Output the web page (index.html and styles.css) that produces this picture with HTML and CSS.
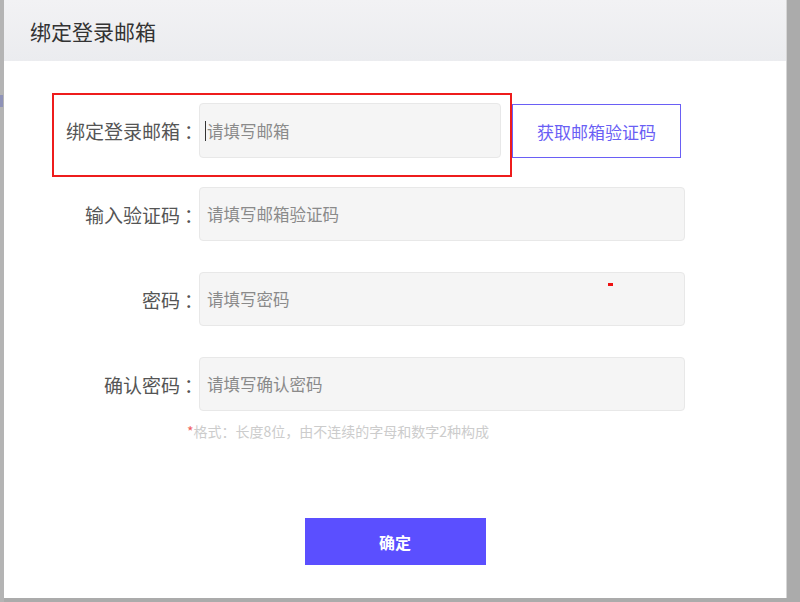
FILE: index.html
```html
<!DOCTYPE html>
<html lang="zh-CN">
<head>
    <meta charset="UTF-8">
    <meta name="viewport" content="width=device-width, initial-scale=1.0">
    <title>绑定登录邮箱</title>
    <link rel="stylesheet" href="styles.css">
</head>
<body>
    <div class="page-edge"><span class="edge-mark"></span></div>
    <div class="modal">
        <div class="modal-header">绑定登录邮箱</div>
        <div class="modal-body">
            <div class="row-first">
                <div class="field highlight">
                    <label class="field-label">绑定登录邮箱<span class="colon">：</span></label>
                    <div class="input-wrap">
                        <input type="text" class="input-field" placeholder="请填写邮箱">
                        <span class="caret"></span>
                    </div>
                </div>
                <button class="code-button">获取邮箱验证码</button>
            </div>
            <div class="field">
                <label class="field-label">输入验证码<span class="colon">：</span></label>
                <input type="text" class="input-field wide" placeholder="请填写邮箱验证码">
            </div>
            <div class="field">
                <label class="field-label">密码<span class="colon">：</span></label>
                <div class="input-wrap">
                    <input type="password" class="input-field wide" placeholder="请填写密码">
                    <span class="red-dot"></span>
                </div>
            </div>
            <div class="field">
                <label class="field-label">确认密码<span class="colon">：</span></label>
                <input type="password" class="input-field wide" placeholder="请填写确认密码">
            </div>
            <p class="hint"><span class="star">*</span>格式：长度8位，由不连续的字母和数字2种构成</p>
            <div class="actions">
                <button class="submit-button">确定</button>
            </div>
        </div>
    </div>
</body>
</html>
```

FILE: styles.css
```css
/* Fond de page grisé derrière la fenêtre */
body {
    margin: 0;
    padding: 0;
    background: #ababab;
    font-family: "Noto Sans CJK SC", "Noto Sans", sans-serif;
    display: flex;
    height: 602px;
    overflow: hidden;
}

.page-edge {
    width: 4px;
    background: #b4b4b4;
    position: relative;
}

.edge-mark {
    position: absolute;
    left: 0;
    top: 95px;
    width: 3px;
    height: 12px;
    background: #8f93b8;
}

.modal {
    width: 783px;
    height: 598px;
    background: #ffffff;
    border-right: 1px solid #d6d6d6;
    box-sizing: border-box;
}

.modal-header {
    height: 61px;
    line-height: 62px;
    padding-left: 26px;
    font-size: 21px;
    color: #333333;
    background: linear-gradient(180deg, #f2f2f4, #ebecef);
}

.modal-body {
    padding-top: 32px;
}

/* Lignes du formulaire */
.row-first {
    display: flex;
    align-items: flex-start;
}

.field {
    display: flex;
    align-items: center;
    margin-left: 50px;
    margin-top: 31px;
}

.row-first + .field {
    margin-top: 10px;
}

.field.highlight {
    margin: 0 0 0 48px;
    width: 460px;
    height: 84px;
    box-sizing: border-box;
    border: 2px solid #ee1c1c;
    padding: 8px 9px 17px 0;
    align-items: flex-start;
}

.field.highlight .field-label {
    line-height: 55px;
}

.field-label {
    width: 139px;
    text-align: right;
    font-size: 19px;
    color: #555555;
    margin-right: 6px;
    flex-shrink: 0;
    white-space: nowrap;
}

/* le deux-points chinois est calé à gauche dans la police, on le recentre */
.colon {
    display: inline-block;
    width: 13px;
    padding-left: 4px;
    box-sizing: border-box;
    text-align: left;
    overflow: visible;
}

.input-wrap {
    position: relative;
}

.input-field {
    display: block;
    width: 302px;
    height: 55px;
    box-sizing: border-box;
    background: #f5f5f5;
    border: 1px solid #e8e8e8;
    border-radius: 4px;
    padding: 0 7px;
    font-family: inherit;
    font-size: 16.5px;
    color: #333333;
    outline: none;
}

.input-field.wide {
    width: 486px;
    height: 54px;
}

.input-field::placeholder {
    color: #8a8a8a;
}

.caret {
    position: absolute;
    left: 6px;
    top: 18px;
    width: 1px;
    height: 20px;
    background: #333333;
}

.red-dot {
    position: absolute;
    left: 409px;
    top: 11px;
    width: 5px;
    height: 3px;
    background: #ee1111;
}

.code-button {
    margin-top: 11px;
    width: 169px;
    height: 54px;
    background: #ffffff;
    border: 1px solid #6a5ff5;
    color: #6a5ff5;
    font-family: inherit;
    font-size: 17px;
    cursor: pointer;
}

.hint {
    margin: 10px 0 0 183px;
    font-size: 14px;
    line-height: 20px;
    color: #cccccc;
}

.star {
    color: #f06060;
}

.actions {
    display: flex;
    justify-content: center;
    margin-top: 77px;
}

.submit-button {
    width: 181px;
    height: 47px;
    background: #5b4fff;
    border: none;
    color: #ffffff;
    font-family: inherit;
    font-size: 16px;
    font-weight: bold;
    cursor: pointer;
}
```
